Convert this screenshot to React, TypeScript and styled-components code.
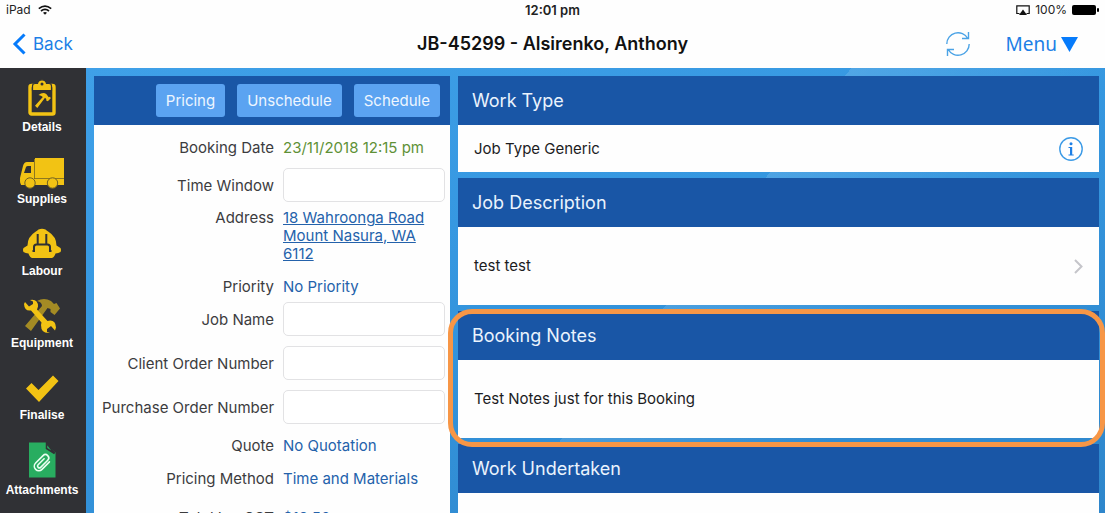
import React from "react";
import styled, { createGlobalStyle } from "styled-components";

const uiFont = `Inter, "Liberation Sans", sans-serif`;

const GlobalStyle = createGlobalStyle`
  *, *::before, *::after { box-sizing: border-box; }
  body { margin: 0; font-family: ${uiFont}; font-size: 15px; line-height: 18px; color: #333; }
  button, input { font: inherit; }
`;

const Screen = styled.div`
  display: flex;
  flex-direction: column;
  height: 100vh;
  overflow: hidden;
  background: #fefefe;
`;

const StatusBar = styled.div`
  display: grid;
  grid-template-columns: 1fr auto 1fr;
  align-items: center;
  height: 20px;
  padding: 0 6px;
  font-size: 12px;
  color: #222;
`;

const StatusGroup = styled.div<{ $end?: boolean }>`
  display: flex;
  align-items: center;
  justify-content: ${(p) => (p.$end ? "flex-end" : "flex-start")};
  gap: ${(p) => (p.$end ? 5 : 7)}px;
`;

const Clock = styled.time`
  font-size: 13px;
  font-weight: 600;
`;

const NavBar = styled.header`
  display: grid;
  grid-template-columns: 1fr auto 1fr;
  align-items: center;
  flex: none;
  height: 48px;
  padding: 0 12px;
`;

const Title = styled.h1`
  margin: 0;
  font-size: 18px;
  line-height: 24px;
  font-weight: 600;
  color: #111;
`;

const NavButton = styled.button<{ $menu?: boolean }>`
  display: flex;
  align-items: center;
  gap: ${(p) => (p.$menu ? 4 : 7)}px;
  padding: 0;
  border: 0;
  background: none;
  color: #1c7fe6;
  font-family: ${(p) => (p.$menu ? `"Noto Sans", sans-serif` : uiFont)};
  font-size: ${(p) => (p.$menu ? 19 : 17)}px;
  line-height: 26px;
`;

const NavActions = styled.div`
  display: flex;
  justify-content: flex-end;
  align-items: center;
  gap: 35px;
  padding-right: 15px;
`;

const Main = styled.div`
  display: flex;
  flex: 1;
  min-height: 0;
`;

const Sidebar = styled.nav`
  display: flex;
  flex-direction: column;
  flex: none;
  width: 86px;
  padding: 9px 2px 0 0;
  background: #303135;
`;

const SideLink = styled.a`
  display: flex;
  flex-direction: column;
  align-items: center;
  flex: none;
  height: 72px;
  color: #fff;
  font: bold 12px/16px "Liberation Sans", Arial, sans-serif;
  text-decoration: none;
  svg { display: block; flex: none; }
`;

const Workspace = styled.main`
  display: grid;
  grid-template-columns: 356fr 641fr;
  gap: 8px;
  flex: 1;
  min-width: 0;
  padding: 8px 6px 0 8px;
  background:
    linear-gradient(128deg, transparent 56%, rgba(255, 255, 255, 0.12) 56%, transparent 76%),
    linear-gradient(165deg, #3fa0e8 0%, #3597e0 40%, #2e86cb 100%);
`;

const Panel = styled.section`
  background: #fefefe;
`;

const PanelTools = styled.div`
  display: flex;
  justify-content: flex-end;
  align-items: center;
  gap: 12px;
  height: 49px;
  padding: 0 10px;
  background: #1956a6;
`;

const ToolButton = styled.button`
  height: 33px;
  padding: 0 10px;
  border: 0;
  border-radius: 3px;
  background: #5ba3f1;
  color: #eef6ff;
`;

const Fields = styled.div`
  padding: 14px 5px 0 8px;
`;

const Row = styled.div<{ $gap?: number }>`
  display: grid;
  grid-template-columns: minmax(0, 1fr) 162px;
  column-gap: 9px;
  align-items: baseline;
  margin-top: ${(p) => p.$gap ?? 0}px;
`;

const FieldLabel = styled.label`
  text-align: right;
  white-space: nowrap;
  color: #3c3c3e;
`;

const Value = styled.span<{ $green?: boolean }>`
  color: ${(p) => (p.$green ? "#5f9136" : "#2462ab")};
  white-space: nowrap;
`;

const AddressLink = styled.a`
  color: #2462ab;
  text-decoration: underline;
`;

const TextInput = styled.input`
  width: 100%;
  height: 34px;
  padding: 0 8px;
  border: 1px solid #e2e2e4;
  border-radius: 5px;
  background: #fff;
`;

const Stack = styled.div`
  display: flex;
  flex-direction: column;
  gap: 6px;
`;

const Card = styled.section`
  position: relative;
  flex: none;
  background: #fefefe;
`;

const CardTitle = styled.h2`
  margin: 0;
  padding: 0 14px;
  background: #1956a6;
  color: #eaf3fd;
  font-size: 18px;
  font-weight: 400;
  line-height: 49px;
`;

const CardBody = styled.div<{ $tall?: boolean }>`
  display: flex;
  justify-content: space-between;
  align-items: center;
  min-height: ${(p) => (p.$tall ? 78 : 47)}px;
  padding: 0 16px;
  color: #1c1c1e;
`;

const IconButton = styled.button`
  display: flex;
  padding: 0;
  border: 0;
  background: none;
`;

const Highlight = styled.div`
  position: absolute;
  z-index: 1;
  inset: -2px -6px -9px -10px;
  border: 5px solid #f79646;
  border-radius: 24px;
  pointer-events: none;
`;

const Y = "#f2c314";

const ClipboardIcon = () => (
  <svg width="28" height="42" viewBox="0 0 28 42">
    <rect x="2" y="8.500" width="24" height="28.500" rx="1.500" fill="none" stroke={Y} strokeWidth="3.400" />
    <path d="M4.500 13.500V9q0-2.500 2.500-2.500h2.500a4.600 4.600 0 0 1 9 0H21q2.500 0 2.500 2.500v4.500z" fill={Y} stroke="#303135" strokeWidth="1.200" />
    <circle cx="14" cy="7" r="1.500" fill="#303135" />
    <path d="M10.500 18q4.500-3.500 8-.8l2.200 3 1.300-.4.800 1.500-3 3-1.600-.8.100-1.400-1.300-1.300L9.300 31 7 28.700l7.800-8.600q-1.500-1.600-4.300-2.100z" fill={Y} />
  </svg>
);

const TruckIcon = () => (
  <svg width="46" height="42" viewBox="0 0 46 42">
    <g fill={Y}>
      <path d="M16 9h29v20H16zM15 13v22H2q-1-1-1-6l3-12q1-4 4-4z" />
      <path d="M15 30h30v6H2l-1-5z" />
    </g>
    <path d="M12 17v7H5l2-6q.5-1 2-1z" fill="#303135" />
    <path d="M15.500 10v19.500H45" fill="none" stroke="#8e7820" />
    <g fill={Y} stroke="#6f6124">
      <circle cx="11" cy="34" r="5.200" />
      <circle cx="33.500" cy="34" r="5.200" />
    </g>
  </svg>
);

const HelmetIcon = () => (
  <svg width="38" height="42" viewBox="0 0 38 42">
    <path d="M15.500 8.500q3.500-1.500 7 0 1.500 1.500 3 2.300 8 5 8 13.700l4 2.500q1 2 0 4-2 1-5 1.500-1.500 4.500-4 4.500h-19q-2.500 0-4-4.500-3-.5-5-1.500-1-2 0-4l4-2.500q0-8.700 8-13.700 1.500-.8 3-2.300z" fill={Y} />
    <path d="M14.700 13v9.500M23.300 13v9.500M11 30v-4q0-2.500 2.500-2.500h11q2.500 0 2.500 2.500v4M9.500 30H12M26 30h2.500" fill="none" stroke="#303135" strokeWidth="2" />
  </svg>
);

const ToolsIcon = () => (
  <svg width="38" height="42" viewBox="0 0 38 42">
    <path d="M14 8q7-4 14 0l3 3 2.500-1 3.500 5.500-5.500 6.500-4-3v-3l-3-1L8 38l-6-5 17-20q0-4-5-5z" fill="#a48b24" />
    <path d="M7 7q8-1.500 8 6.500l-1 3 10.500 11.500q8-2 8.500 6.500l-1 3-4-4.500-4 3v3l3 1q-9 1-9-8l.5-2.500L8 17.500Q1.500 18.500 1 11l1-2 4 4.500 4-2.500V8.500z" fill={Y} />
  </svg>
);

const CheckIcon = () => (
  <svg width="34" height="42" viewBox="0 0 34 42">
    <path d="M1 23.500L6.500 18l7 7L28 10.500l5.500 5.500L14 37z" fill={Y} />
  </svg>
);

const AttachmentIcon = () => (
  <svg width="28" height="45" viewBox="0 0 28 45">
    <path d="M1 5.500h17l9.500 10V40.500H1z" fill="#28ad60" />
    <path d="M18.500 6v5.500l8 5zM18.500 6l8.500 10" fill="none" stroke="#303135" strokeWidth="1.500" />
    <g transform="rotate(45 14 26)" fill="none" stroke="#e9fff1" strokeWidth="1.600" strokeLinecap="round">
      <path d="M18.500 20v10.500a4.500 4.500 0 0 1-9 0V20a3.300 3.300 0 0 1 6.600 0v10a1.800 1.800 0 0 1-3.600 0v-8.500" />
    </g>
  </svg>
);

const sideItems = [
  { name: "Details", Icon: ClipboardIcon },
  { name: "Supplies", Icon: TruckIcon },
  { name: "Labour", Icon: HelmetIcon },
  { name: "Equipment", Icon: ToolsIcon },
  { name: "Finalise", Icon: CheckIcon },
  { name: "Attachments", Icon: AttachmentIcon },
];

function InputRow({ id, label, gap }: { id: string; label: string; gap: number }) {
  return (
    <Row $gap={gap}>
      <FieldLabel htmlFor={id}>{label}</FieldLabel>
      <TextInput id={id} type="text" />
    </Row>
  );
}

function ValueRow({ label, value, gap, green }: { label: string; value: string; gap?: number; green?: boolean }) {
  return (
    <Row $gap={gap}>
      <FieldLabel as="span">{label}</FieldLabel>
      <Value $green={green}>{value}</Value>
    </Row>
  );
}

export default function App() {
  return (
    <Screen>
      <GlobalStyle />
      <StatusBar>
        <StatusGroup>
          <span>iPad</span>
          <svg width="14" height="10" viewBox="0 0 14 10" fill="none" stroke="#111" strokeWidth="1.700">
            <path d="M.8 3.600q6.200-5 12.400 0M3 6q4-3.200 8 0" />
            <path d="M5 7.700q2-1.500 4 0L7 9.800z" fill="#111" stroke="none" />
          </svg>
        </StatusGroup>
        <Clock>12:01 pm</Clock>
        <StatusGroup $end>
          <svg width="14" height="11" viewBox="0 0 14 11">
            <path d="M3.500 8.500H.8V.8h12.400v7.700h-2.700" fill="none" stroke="#111" strokeWidth="1.200" />
            <path d="M7 4.500l4 5.500H3z" fill="#111" />
          </svg>
          <span>100%</span>
          <svg width="27" height="10" viewBox="0 0 27 10">
            <rect width="24" height="10" rx="2" />
            <rect x="25" y="3" width="2" height="4" rx="1" />
          </svg>
        </StatusGroup>
      </StatusBar>
      <NavBar>
        <NavButton type="button">
          <svg width="14" height="22" viewBox="0 0 14 22">
            <path d="M12.500 1.500L3 11l9.500 9.500" fill="none" stroke="#067bfb" strokeWidth="3" />
          </svg>
          Back
        </NavButton>
        <Title>JB-45299 - Alsirenko, Anthony</Title>
        <NavActions>
          <IconButton type="button" aria-label="Refresh">
            <svg width="26" height="26" viewBox="0 0 26 26" fill="none" stroke="#4ba3e6" strokeWidth="1.400">
              <path d="M1.800 13A11.200 11.200 0 0 1 22.800 7.500M23.500 1v6.500H17M24.200 13A11.200 11.200 0 0 1 3.200 18.500M2.500 25v-6.500H9" />
            </svg>
          </IconButton>
          <NavButton type="button" $menu>
            Menu
            <svg width="17" height="15" viewBox="0 0 17 15">
              <path d="M0 0h17L8.500 15z" fill="#067bfb" />
            </svg>
          </NavButton>
        </NavActions>
      </NavBar>
      <Main>
        <Sidebar>
          {sideItems.map(({ name, Icon }) => (
            <SideLink key={name} href={`#${name.toLowerCase()}`}>
              <Icon />
              {name}
            </SideLink>
          ))}
        </Sidebar>
        <Workspace>
          <Panel>
            <PanelTools>
              <ToolButton type="button">Pricing</ToolButton>
              <ToolButton type="button">Unschedule</ToolButton>
              <ToolButton type="button">Schedule</ToolButton>
            </PanelTools>
            <Fields>
              <ValueRow label="Booking Date" value="23/11/2018 12:15 pm" green />
              <InputRow id="time-window" label="Time Window" gap={11} />
              <Row $gap={7}>
                <FieldLabel as="span">Address</FieldLabel>
                <AddressLink href="#address">18 Wahroonga Road Mount Nasura, WA 6112</AddressLink>
              </Row>
              <ValueRow label="Priority" value="No Priority" gap={15} />
              <InputRow id="job-name" label="Job Name" gap={6} />
              <InputRow id="client-order" label="Client Order Number" gap={10} />
              <InputRow id="purchase-order" label="Purchase Order Number" gap={10} />
              <ValueRow label="Quote" value="No Quotation" gap={13} />
              <ValueRow label="Pricing Method" value="Time and Materials" gap={15} />
              <ValueRow label="Total Inc GST" value="$18.50" gap={21} />
            </Fields>
          </Panel>
          <Stack>
            <Card>
              <CardTitle>Work Type</CardTitle>
              <CardBody>
                Job Type Generic
                <IconButton type="button" aria-label="Job type information">
                  <svg width="24" height="24" viewBox="0 0 24 24">
                    <circle cx="12" cy="12" r="11.200" fill="none" stroke="#3d9be6" strokeWidth="1.400" />
                    <circle cx="12" cy="6.800" r="1.500" fill="#1c7fe6" />
                    <path d="M9.500 10h3.700v7.500h1.500v1H9.500v-1H11V11H9.500z" fill="#1c7fe6" />
                  </svg>
                </IconButton>
              </CardBody>
            </Card>
            <Card>
              <CardTitle>Job Description</CardTitle>
              <CardBody $tall>
                test test
                <svg width="9" height="15" viewBox="0 0 9 15">
                  <path d="M1 1l6.500 6.500L1 14" fill="none" stroke="#c5c5ca" strokeWidth="2" />
                </svg>
              </CardBody>
            </Card>
            <Card>
              <CardTitle>Booking Notes</CardTitle>
              <CardBody $tall>Test Notes just for this Booking</CardBody>
              <Highlight />
            </Card>
            <Card>
              <CardTitle>Work Undertaken</CardTitle>
              <CardBody $tall />
            </Card>
          </Stack>
        </Workspace>
      </Main>
    </Screen>
  );
}
